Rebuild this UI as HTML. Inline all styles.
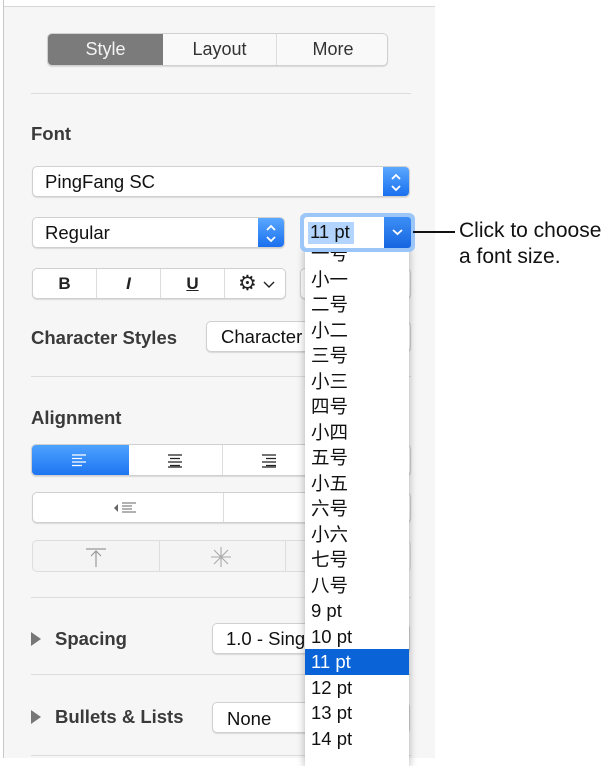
<!DOCTYPE html>
<html><head><meta charset="utf-8"><style>
*{box-sizing:border-box;margin:0;padding:0}
body{width:612px;height:758px;background:#fff;position:relative;overflow:hidden;font-family:"Liberation Sans","Noto Sans CJK SC",sans-serif;color:#222}
.abs{position:absolute}
#panel{left:3px;top:0;width:432px;height:758px;background:#f6f6f6;border-left:1px solid #c8c8c8}
.sep{position:absolute;left:31px;width:380px;height:1px;background:#dcdcdc}
.btn{position:absolute;background:#fff;border:1px solid #d0d0d0;border-radius:5px;box-shadow:0 1px 1px rgba(0,0,0,.12);overflow:hidden}
.lbl{position:absolute;font-size:18.5px;color:#3a3a3a;font-weight:bold;white-space:nowrap}
.txt{position:absolute;font-size:18.5px;color:#111;white-space:nowrap}
.step{position:absolute;right:0;top:0;bottom:0;width:26px;background:linear-gradient(#5aa8ff,#1a6fee)}
.list div{height:25.5px;line-height:25.5px;padding-left:6px;font-size:18.5px;color:#111}
</style></head><body>
<div id="panel" class="abs"></div>
<div class="abs" style="left:3px;top:0;width:432px;height:7px;background:#fff;border-bottom:1px solid #d6d6d6;border-left:1px solid #c8c8c8"></div>

<div class="btn" style="left:47px;top:33px;width:341px;height:33px;background:#f9f9f9">
 <div class="abs" style="left:0;top:0;width:115px;height:33px;background:#7b7b7b;color:#f4f4f4;font-size:18px;text-align:center;line-height:31px">Style</div>
 <div class="abs" style="left:115px;top:0;width:114px;height:33px;border-right:1px solid #ddd;font-size:18px;text-align:center;line-height:31px;color:#333">Layout</div>
 <div class="abs" style="left:229px;top:0;width:112px;height:33px;font-size:18px;text-align:center;line-height:31px;color:#333">More</div>
</div>
<div class="sep" style="top:93px"></div>

<div class="lbl" style="left:31px;top:123px">Font</div>
<div class="btn" style="left:32px;top:166px;width:378px;height:31px"><div class="txt" style="left:12px;top:4px">PingFang SC</div><div class="step"><svg width="26" height="31"><path d="M9 12l4-4 4 4M9 19l4 4 4-4" stroke="#fff" stroke-width="1.8" fill="none"/></svg></div></div>
<div class="btn" style="left:32px;top:217px;width:253px;height:31px"><div class="txt" style="left:12px;top:4px">Regular</div><div class="step"><svg width="26" height="31"><path d="M9 12l4-4 4 4M9 19l4 4 4-4" stroke="#fff" stroke-width="1.8" fill="none"/></svg></div></div>

<div class="btn" style="left:300px;top:268px;width:111px;height:31px"></div>
<div class="abs" style="left:305px;top:268px;width:2px;height:30px;background:#111"></div>
<div class="btn" style="left:206px;top:321px;width:205px;height:31px"><div class="txt" style="left:14px;top:4px">Character</div></div>

<div class="btn" style="left:32px;top:268px;width:254px;height:31px">
 <div class="abs" style="left:63px;top:0;width:1px;height:29px;background:#ddd"></div>
 <div class="abs" style="left:127px;top:0;width:1px;height:29px;background:#ddd"></div>
 <div class="abs" style="left:191px;top:0;width:1px;height:29px;background:#ddd"></div>
 <div class="abs" style="left:0;width:63px;top:5px;text-align:center;font-weight:bold;font-size:17px">B</div>
 <div class="abs" style="left:64px;width:63px;top:5px;text-align:center;font-weight:bold;font-style:italic;font-size:17px">I</div>
 <div class="abs" style="left:128px;width:63px;top:5px;text-align:center;font-weight:bold;text-decoration:underline;font-size:17px">U</div>
 <div class="abs" style="left:205px;top:2px;font-size:21px">⚙</div>
 <svg class="abs" style="left:230px;top:12px" width="12" height="8"><path d="M1 1l5 5 5-5" stroke="#222" stroke-width="1.4" fill="none"/></svg>
</div>

<div class="lbl" style="left:31px;top:327px">Character Styles</div>
<div class="sep" style="top:376px"></div>
<div class="lbl" style="left:31px;top:407px">Alignment</div>
<div class="btn" style="left:31px;top:444px;width:380px;height:32px">
 <div class="abs" style="left:0;top:0;width:97px;height:32px;background:linear-gradient(#4ea2ff,#1a72f0)"></div>
 <div class="abs" style="left:190px;top:0;width:1px;height:32px;background:#ddd"></div>
 <svg class="abs" style="left:39px;top:9px" width="16" height="14"><path d="M1 1h14M1 4.5h10M1 8h14M1 11.5h10" stroke="#fff" stroke-width="1.3"/></svg>
 <svg class="abs" style="left:135px;top:9px" width="16" height="14"><path d="M1 1h14M3 4.5h10M1 8h14M3 11.5h10M1 13h14" stroke="#222" stroke-width="1.2"/></svg>
 <svg class="abs" style="left:229px;top:9px" width="16" height="14"><path d="M1 1h14M5 4.5h10M1 8h14M5 11.5h10M1 13h14" stroke="#222" stroke-width="1.2"/></svg>
</div>
<div class="btn" style="left:32px;top:492px;width:379px;height:31px">
 <div class="abs" style="left:190px;top:0;width:1px;height:29px;background:#ddd"></div>
 <svg class="abs" style="left:80px;top:8px" width="28" height="14"><path d="M5 3v8l-4-4z" fill="#666"/><path d="M9 2h14M9 5h10M9 8h10M9 11h14" stroke="#666" stroke-width="1"/></svg>
</div>
<div class="btn" style="left:32px;top:540px;width:379px;height:32px;background:#f4f4f4;box-shadow:none;border-color:#ddd">
 <div class="abs" style="left:126px;top:0;width:1px;height:30px;background:#ddd"></div>
 <div class="abs" style="left:252px;top:0;width:1px;height:30px;background:#ddd"></div>
 <svg class="abs" style="left:52px;top:7px" width="22" height="20"><path d="M1 1h20M11 3v16M6 8l5-5 5 5" stroke="#999" stroke-width="1.2" fill="none"/></svg>
 <svg class="abs" style="left:177px;top:5px" width="22" height="22"><path d="M11 1v20M1 11h20M4 4l14 14M18 4L4 18" stroke="#aaa" stroke-width="1.1"/></svg>
</div>
<div class="sep" style="top:597px"></div>
<svg class="abs" style="left:31px;top:632px" width="11" height="14"><path d="M0 0l10 7-10 7z" fill="#777"/></svg>
<div class="lbl" style="left:55px;top:628px">Spacing</div>
<div class="btn" style="left:212px;top:623px;width:198px;height:31px"><div class="txt" style="left:13px;top:4px">1.0 - Single</div></div>
<div class="sep" style="top:674px"></div>
<svg class="abs" style="left:31px;top:710px" width="11" height="14"><path d="M0 0l10 7-10 7z" fill="#777"/></svg>
<div class="lbl" style="left:55px;top:706px">Bullets &amp; Lists</div>
<div class="btn" style="left:212px;top:702px;width:198px;height:31px"><div class="txt" style="left:14px;top:5px">None</div></div>
<div class="sep" style="top:755px"></div>

<div class="abs" style="left:305px;top:246px;width:104px;height:520px;background:#fff;box-shadow:0 2px 8px rgba(0,0,0,.3);overflow:hidden">
 <div class="list" style="position:absolute;left:0;top:-5px;width:104px">
  <div>一号</div><div>小一</div><div>二号</div><div>小二</div><div>三号</div><div>小三</div><div>四号</div><div>小四</div><div>五号</div><div>小五</div><div>六号</div><div>小六</div><div>七号</div><div>八号</div><div>9 pt</div><div>10 pt</div><div style="background:#0a64d8;color:#fff">11 pt</div><div>12 pt</div><div>13 pt</div><div>14 pt</div>
 </div>
</div>

<div class="abs" style="left:300px;top:213px;width:115px;height:39px;background:#9cc6f8;border-radius:6px"></div>
<div class="abs" style="left:304px;top:217px;width:107px;height:31px;background:#fff;border-radius:3px;overflow:hidden">
 <div class="abs" style="left:4px;top:5px;height:22px;width:46px;background:#b3d5fd"></div>
 <div class="txt" style="left:6px;top:4px">11 pt</div>
 <div class="abs" style="right:0;top:0;width:27px;height:31px;background:linear-gradient(#3d8ff5,#1565e0)"><svg width="27" height="31"><path d="M9 13l4.5 4 4.5-4" stroke="#fff" stroke-width="1.8" fill="none"/></svg></div>
</div>

<div class="abs" style="left:413px;top:231px;width:42px;height:1.5px;background:#111"></div>
<div class="abs" style="left:459px;top:218px;font-size:21px;line-height:26px;color:#111;white-space:nowrap">Click to choose<br>a font size.</div>
</body></html>
